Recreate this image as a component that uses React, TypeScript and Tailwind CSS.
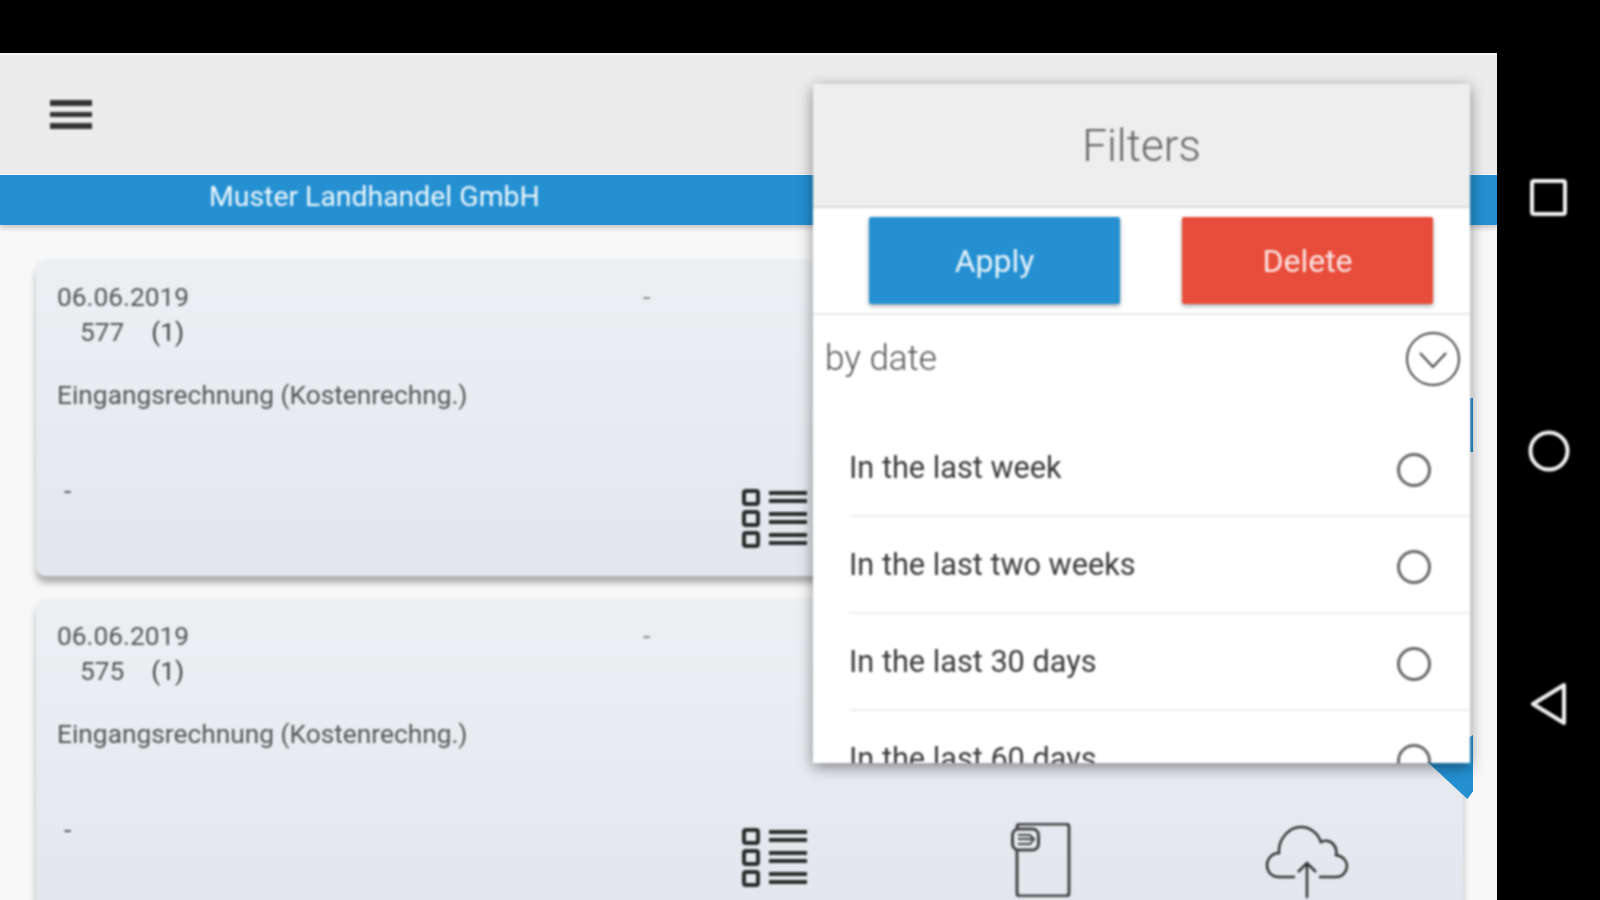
const FONT = "font-['Roboto',sans-serif]"

const filterOptions = ['In the last week', 'In the last two weeks', 'In the last 30 days', 'In the last 60 days']

function MenuIcon() {
  return (
    <svg className="blur-[0.8px]" width="42" height="30" viewBox="0 0 42 30" fill="#333">
      <rect x="0" y="0" width="42" height="6" />
      <rect x="0" y="12" width="42" height="5" />
      <rect x="0" y="23" width="42" height="6" />
    </svg>
  )
}

function ChecklistIcon() {
  return (
    <svg width="66" height="62" viewBox="0 0 66 62" fill="none" stroke="#2b2b2b" strokeWidth="4">
      <rect x="2" y="3" width="14" height="13" rx="2" />
      <rect x="2" y="24" width="14" height="13" rx="2" />
      <rect x="2" y="45" width="14" height="13" rx="2" />
      <path strokeWidth="4" d="M27 5h38M27 13h38M27 26h38M27 34h38M27 47h38M27 55h38" />
    </svg>
  )
}

function DocumentIcon() {
  return (
    <svg width="60" height="74" viewBox="0 0 60 74" fill="none" stroke="#444" strokeWidth="3">
      <path d="M6 4q0-3 3-3h46q3 0 3 3v66q0 3-3 3H9q-3 0-3-3z" />
      <rect x="1.5" y="6" width="26" height="21" rx="6" fill="#e6e9ee" />
      <path strokeWidth="2" d="M7 12h12l4 4-4 5H7M7 16h15" />
    </svg>
  )
}

function CloudUploadIcon() {
  return (
    <svg width="84" height="74" viewBox="0 0 84 74" fill="none" stroke="#333" strokeWidth="2.5">
      <path d="M30 52H14C6 52 2 46 2 40s5-12 12-12c-1-14 10-26 22-26 9 0 17 6 20 15 3-2 9-2 12 2 3 3 4 7 3 11 7 1 11 6 11 11s-4 11-11 11H54" />
      <path d="M42 73V38M33 47l9-9 9 9" />
    </svg>
  )
}

function InvoiceCard({ number }: { number: string }) {
  return (
    <div className="h-[317px] shrink-0 rounded-[10px] bg-gradient-to-b from-[#edf0f3] to-[#e3e6ec] pl-[21px] pt-[20px] text-[26.3px] leading-[36px] text-[#555] shadow-[0_7px_6px_rgba(0,0,0,0.3)] blur-[0.8px]">
      <div className="flex">
        <span className="w-[586px]">06.06.2019</span>
        <span className="text-[#888]">-</span>
      </div>
      <div className="-mt-[1px] flex gap-[27px] pl-[23px]">
        <span>{number}</span>
        <span className="text-[#444]">(1)</span>
      </div>
      <div className="mt-[27px]">Eingangsrechnung (Kostenrechng.)</div>
      <div className="mt-[75px] flex h-[74px] items-start">
        <span className="-mt-[15px] w-[685px] pl-[7px]">-</span>
        <ChecklistIcon />
        <div className="ml-[203px] -mt-[4px]">
          <DocumentIcon />
        </div>
        <div className="ml-[194px] -mt-[2px]">
          <CloudUploadIcon />
        </div>
      </div>
    </div>
  )
}

function FilterPanel() {
  return (
    <div className="absolute left-[813px] top-[31px] flex h-[679px] w-[657px] flex-col overflow-hidden bg-white shadow-[0_4px_14px_rgba(0,0,0,0.45)] blur-[0.8px]">
      <div className="flex h-[124px] shrink-0 items-center justify-center border-b-2 border-[#dcdcdc] bg-[#eeeeee] pt-[2px] text-[44px] font-light text-[#666]">
        Filters
      </div>
      <div className="flex h-[107px] shrink-0 items-start gap-[62px] border-b-2 border-[#e8e8e8] pl-[56px] pt-[9px]">
        <button className="h-[87px] w-[251px] rounded-[2px] bg-[#2490d2] text-[32px] text-[#e6f3fa] shadow-[0_2px_4px_rgba(0,0,0,0.35)]">
          Apply
        </button>
        <button className="h-[87px] w-[251px] rounded-[2px] bg-[#e84c3a] text-[32px] text-[#fbe5e2] shadow-[0_2px_4px_rgba(0,0,0,0.35)]">
          Delete
        </button>
      </div>
      <div className="flex h-[105px] shrink-0 items-start justify-between pl-[12px] pr-[10px] pt-[17px]">
        <span className="mt-[2px] text-[35px] font-light leading-[50px] text-[#555]">by date</span>
        <svg width="54" height="54" viewBox="0 0 54 54" fill="none" stroke="#444" strokeWidth="2">
          <circle cx="27" cy="27" r="26" />
          <path d="M14 21l13 14 13-14" />
        </svg>
      </div>
      <div className="pl-[36px]">
        {filterOptions.map((option) => (
          <div key={option} className="flex h-[97px] items-center justify-between border-b-2 border-[#eeeeee] pr-[39px] text-[30.7px] text-[#3a3a3a]">
            <span className="mt-[1px]">{option}</span>
            <span className="mt-[4px] h-[34px] w-[34px] rounded-full border-[3px] border-[#666]" />
          </div>
        ))}
      </div>
    </div>
  )
}

export default function App() {
  return (
    <div className={`${FONT} flex h-[900px] w-[1600px] flex-col overflow-hidden bg-black`}>
      <div className="h-[53px] shrink-0" />
      <div className="flex min-h-0 flex-1">
        <div className="relative flex w-[1497px] flex-col overflow-hidden bg-[#f8f8f8]">
          <header className="flex h-[121px] shrink-0 items-start border-t-2 border-[#f6f6f6] bg-[#ececec] pl-[50px] pt-[45px]">
            <MenuIcon />
          </header>
          <div className="h-[51px] shrink-0 border-t border-[#f8f8f8] bg-[#2490d2] pl-[209px] text-[28.4px] leading-[44px] text-[#eef7fc] shadow-[0_3px_5px_rgba(0,0,0,0.2)]">
            <span className="inline-block blur-[0.8px]">Muster Landhandel GmbH</span>
          </div>
          <main className="flex flex-col gap-[22px] pl-[36px] pr-[34px] pt-[34px]">
            <InvoiceCard number="577" />
            <InvoiceCard number="575" />
          </main>
          {/* corner markers peeking out from behind the panel */}
          <div className="absolute left-[1470px] top-[345px] h-[54px] w-[3px] bg-[#2490d2]" />
          <div className="absolute left-[1426px] top-[682px] h-[64px] w-[47px] bg-[#2490d2] [clip-path:polygon(100%_0,100%_88%,88%_100%,0_40%)]" />
          <FilterPanel />
        </div>
        <nav className="flex flex-1 flex-col items-center blur-[0.8px]">
          <svg className="mt-[126px]" width="37" height="37" viewBox="0 0 37 37" fill="none" stroke="#f2f2f2" strokeWidth="4">
            <rect x="2" y="2" width="33" height="33" rx="2" />
          </svg>
          <svg className="mt-[214px]" width="42" height="42" viewBox="0 0 42 42" fill="none" stroke="#f2f2f2" strokeWidth="4">
            <circle cx="21" cy="21" r="18.5" />
          </svg>
          <svg className="mt-[210px]" width="37" height="44" viewBox="0 0 37 44" fill="none" stroke="#f2f2f2" strokeWidth="4" strokeLinejoin="round">
            <path d="M34 3v38L3 22z" />
          </svg>
        </nav>
      </div>
    </div>
  )
}
